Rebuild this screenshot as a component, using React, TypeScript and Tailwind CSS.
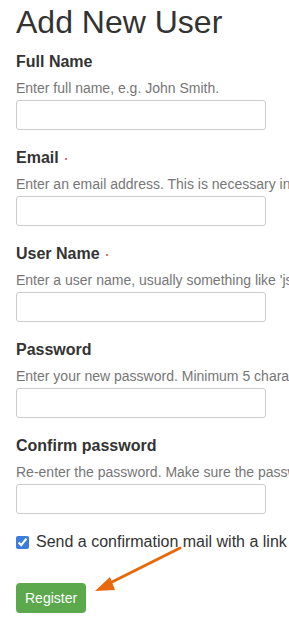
import React from "react";

interface IField {
  label: string;
  help: string;
  required?: boolean;
  type?: string;
}

const fields: IField[] = [
  { label: "Full Name", help: "Enter full name, e.g. John Smith." },
  {
    label: "Email",
    help: "Enter an email address. This is necessary in case the password is lost.",
    required: true,
    type: "email",
  },
  {
    label: "User Name",
    help: "Enter a user name, usually something like 'jsmith'. No spaces or special characters.",
    required: true,
  },
  {
    label: "Password",
    help: "Enter your new password. Minimum 5 characters, but more is better.",
    type: "password",
  },
  {
    label: "Confirm password",
    help: "Re-enter the password. Make sure the passwords match.",
    type: "password",
  },
];

const Field = ({ label, help, required, type }: IField) => (
  <div className="mb-[18px]">
    <label className="flex items-center text-[16px] font-bold leading-[20px] text-[#333]">
      {label}
      {required && (
        <span className="ml-[6px] mt-[2px] inline-block h-[2px] w-[2px] rounded-full bg-[#d9434e]" />
      )}
    </label>
    <div className="mt-[6px] whitespace-nowrap text-[14px] leading-[20px] text-[#767676]">
      {help}
    </div>
    <input
      type={type || "text"}
      className="mt-[2px] block h-[30px] w-[250px] rounded-[3px] border border-[#ccc] bg-white"
    />
  </div>
);

export default function App() {
  return (
    <div
      className="relative h-[631px] w-[289px] overflow-hidden bg-white px-4"
      style={{ fontFamily: '"Liberation Sans", Arial, sans-serif' }}
    >
      <h1 className="mt-[4px] whitespace-nowrap text-[32px] leading-[36px] font-normal text-[#333]">
        Add New User
      </h1>
      <div className="mt-[12px]">
        {fields.map((f) => (
          <Field key={f.label} {...f} />
        ))}
      </div>
      <label className="flex items-center whitespace-nowrap text-[16px] leading-[20px] text-[#333]">
        <input
          type="checkbox"
          defaultChecked
          className="m-0 mr-[7px] h-[13px] w-[13px] accent-[#3b7ddd]"
        />
        Send a confirmation mail with a link
      </label>
      <button className="mt-[31px] rounded-[4px] bg-[#5ca84d] px-[9px] py-[5px] text-[14px] leading-[20px] text-white">
        Register
      </button>
      <svg
        className="pointer-events-none absolute left-0 top-0"
        width="289"
        height="631"
        viewBox="0 0 289 631"
      >
        <line x1="180" y1="548" x2="104" y2="586" stroke="#e8680c" strokeWidth="3" strokeLinecap="round" />
        <polygon points="95,591 110,577 115,590" fill="#e8680c" />
      </svg>
    </div>
  );
}
